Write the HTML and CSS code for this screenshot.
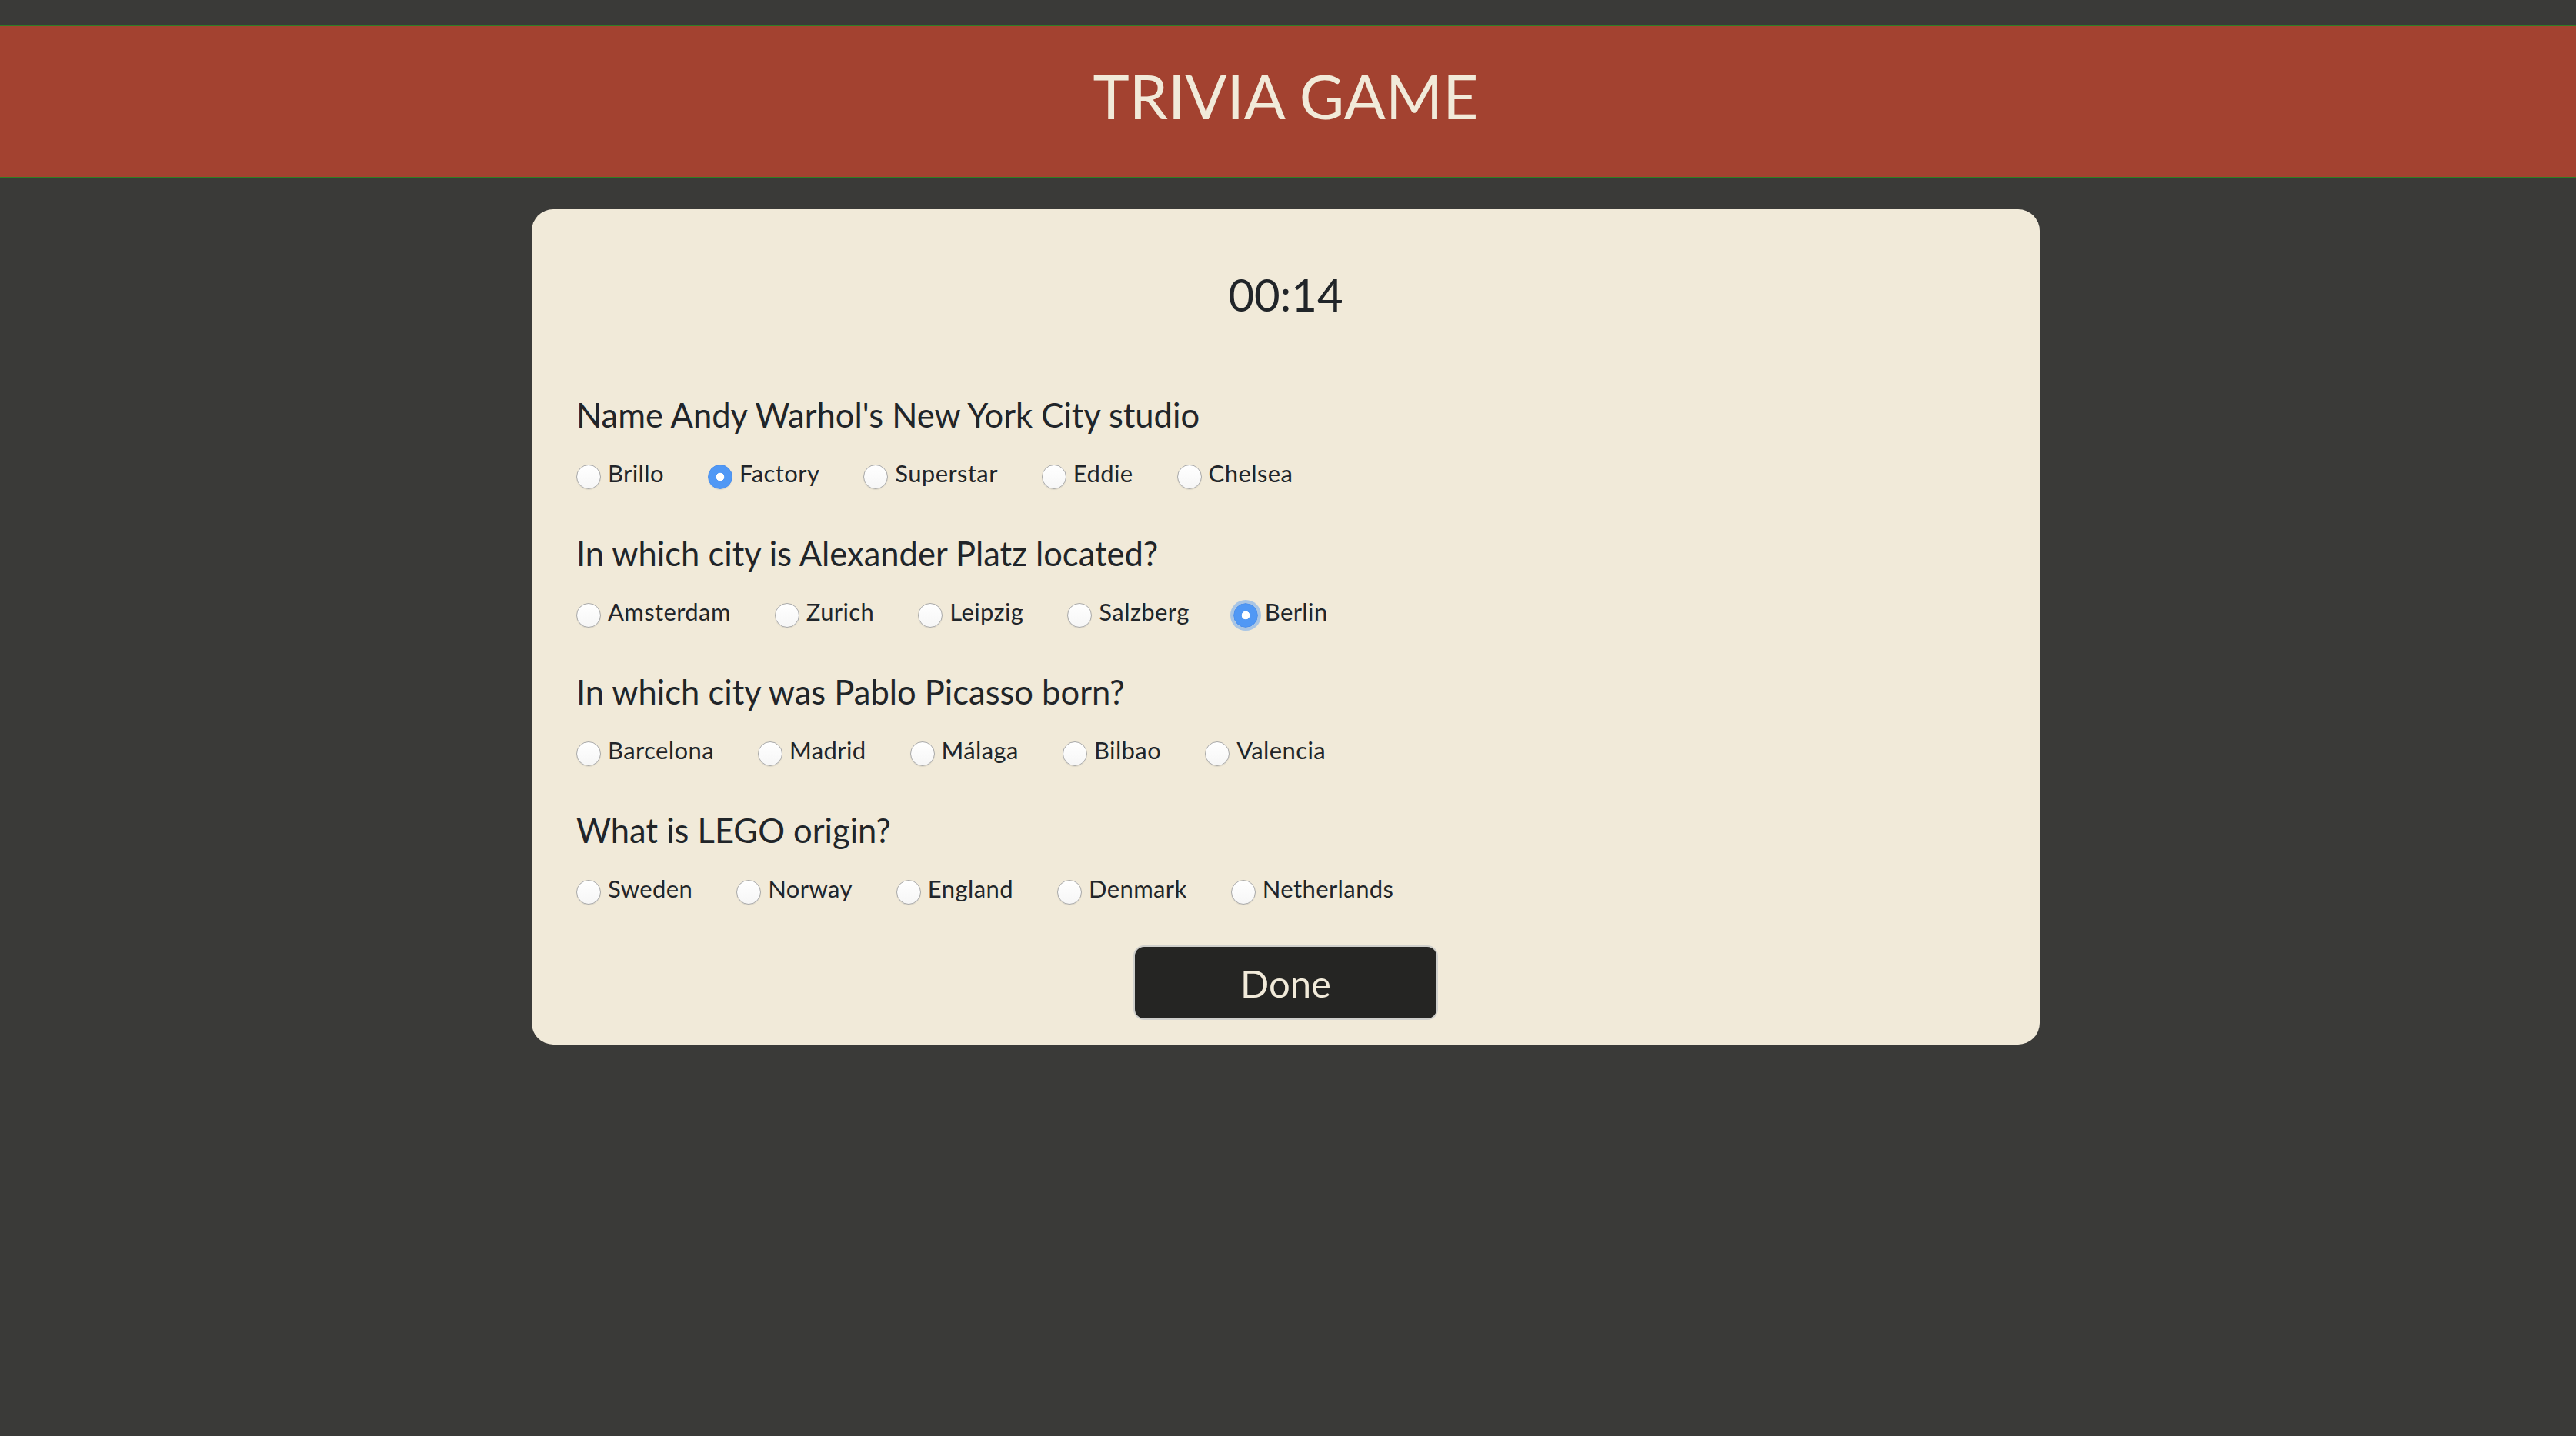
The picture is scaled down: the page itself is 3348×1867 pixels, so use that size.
FILE: index.html
```html
<!DOCTYPE html>
<html lang="en">
<head>
<meta charset="utf-8">
<title>Trivia Game</title>
<link rel="stylesheet" href="styles.css">
</head>
<body>
<header class="site-header">
  <h1 class="site-title">TRIVIA GAME</h1>
</header>
<div class="page">
<main class="card">
  <div class="timer">00:14</div>

  <section class="question">
    <h2 class="question-title">Name Andy Warhol's New York City studio</h2>
    <div class="options">
      <label class="option"><input type="radio" name="q1" class="radio"><span>Brillo</span></label>
      <label class="option"><input type="radio" name="q1" class="radio" checked><span>Factory</span></label>
      <label class="option"><input type="radio" name="q1" class="radio"><span>Superstar</span></label>
      <label class="option"><input type="radio" name="q1" class="radio"><span>Eddie</span></label>
      <label class="option"><input type="radio" name="q1" class="radio"><span>Chelsea</span></label>
    </div>
  </section>

  <section class="question">
    <h2 class="question-title">In which city is Alexander Platz located?</h2>
    <div class="options">
      <label class="option"><input type="radio" name="q2" class="radio"><span>Amsterdam</span></label>
      <label class="option"><input type="radio" name="q2" class="radio"><span>Zurich</span></label>
      <label class="option"><input type="radio" name="q2" class="radio"><span>Leipzig</span></label>
      <label class="option"><input type="radio" name="q2" class="radio"><span>Salzberg</span></label>
      <label class="option"><input type="radio" name="q2" class="radio radio-focus" checked><span>Berlin</span></label>
    </div>
  </section>

  <section class="question">
    <h2 class="question-title">In which city was Pablo Picasso born?</h2>
    <div class="options">
      <label class="option"><input type="radio" name="q3" class="radio"><span>Barcelona</span></label>
      <label class="option"><input type="radio" name="q3" class="radio"><span>Madrid</span></label>
      <label class="option"><input type="radio" name="q3" class="radio"><span>Málaga</span></label>
      <label class="option"><input type="radio" name="q3" class="radio"><span>Bilbao</span></label>
      <label class="option"><input type="radio" name="q3" class="radio"><span>Valencia</span></label>
    </div>
  </section>

  <section class="question">
    <h2 class="question-title">What is LEGO origin?</h2>
    <div class="options">
      <label class="option"><input type="radio" name="q4" class="radio"><span>Sweden</span></label>
      <label class="option"><input type="radio" name="q4" class="radio"><span>Norway</span></label>
      <label class="option"><input type="radio" name="q4" class="radio"><span>England</span></label>
      <label class="option"><input type="radio" name="q4" class="radio"><span>Denmark</span></label>
      <label class="option"><input type="radio" name="q4" class="radio"><span>Netherlands</span></label>
    </div>
  </section>

  <button class="done-btn" type="button">Done</button>
</main>
</div>
</body>
</html>
```

FILE: styles.css
```css
html, body {
  margin: 0;
  padding: 0;
}

body {
  background: #3a3a38;
  font-family: Lato, "Noto Sans", sans-serif;
  color: #212529;
  min-height: 1867px;
}

.site-header {
  margin-top: 32px;
  background: #a34230;
  border-top: 2px solid #2f7d24;
  border-bottom: 2px solid #2f7d24;
  padding: 40px 6px 56px 0;
  text-align: center;
}

.site-title {
  margin: 0;
  font-family: Lato, sans-serif;
  font-weight: 400;
  font-size: 80px;
  line-height: 100px;
  color: #f1ead9;
}

.page {
  padding-right: 6px;
}

.card {
  box-sizing: border-box;
  width: 1960px;
  margin: 40px auto 0;
  background: #f1ead9;
  border-radius: 28px;
  padding: 75px 58px 32px;
}

.timer {
  text-align: center;
  font-size: 58px;
  line-height: 72px;
  font-weight: 400;
  color: #212529;
}

.question {
  margin-top: 59px;
}

.question:first-of-type {
  margin-top: 95px;
}

.question-title {
  margin: 0;
  font-size: 43.5px;
  line-height: 50px;
  font-weight: 400;
  color: #212529;
}

.options {
  display: flex;
  margin-top: 31px;
  height: 40px;
}

.option {
  display: flex;
  align-items: center;
  margin-right: 57px;
  font-size: 31px;
  line-height: 40px;
  font-weight: 400;
  letter-spacing: 0.4px;
  color: #212529;
}

.radio {
  appearance: none;
  -webkit-appearance: none;
  box-sizing: border-box;
  width: 32px;
  height: 32px;
  margin: 10px 9px 0 0;
  border-radius: 50%;
  border: 1px solid #a9a9a9;
  background: linear-gradient(#ffffff, #f6f6f6);
  box-shadow: 0 1px 1px rgba(0, 0, 0, 0.08);
  flex: none;
}

.radio:checked {
  border-color: #4a8fec;
  background: radial-gradient(circle, #ffffff 0 5px, #5098f5 5.6px);
}

.radio-focus {
  box-shadow: 0 0 0 4px rgba(80, 152, 245, 0.45);
}

.done-btn {
  display: block;
  box-sizing: border-box;
  width: 396px;
  height: 97px;
  margin: 54px auto 0;
  padding: 0;
  background: #252523;
  border: 2px solid #cfcfcb;
  border-radius: 14px;
  color: #f1ead9;
  font-family: Lato, sans-serif;
  font-size: 49px;
  font-weight: 400;
  cursor: pointer;
}
```
